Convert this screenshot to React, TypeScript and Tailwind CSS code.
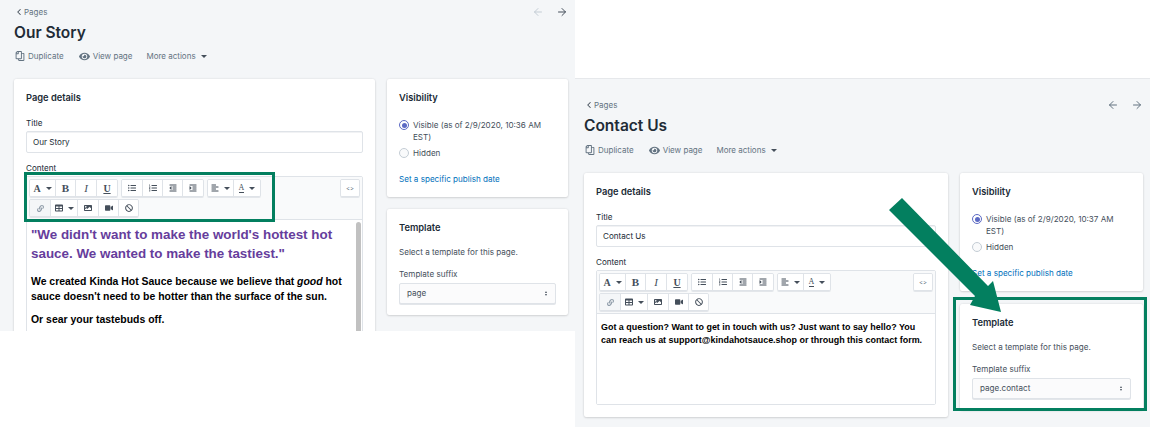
import { ChevronLeft, ArrowLeft, ArrowRight } from "lucide-react";
import { FaListUl, FaListOl, FaIndent, FaOutdent, FaAlignLeft, FaLink, FaTable, FaImage, FaVideo, FaBan, FaRegCopy, FaEye } from "react-icons/fa";

const font = "font-['Inter','Liberation_Sans',sans-serif]";

const Caret = () => (
  <span className="ml-[5px] h-0 w-0 border-x-[3px] border-t-[3px] border-x-transparent border-t-[#454f5b]" />
);

const Btn = ({ w, children, active }: { w: string; children: React.ReactNode; active?: boolean }) => (
  <div
    className={`flex h-[16px] items-center justify-center border-r border-[#dfe3e8] last:border-r-0 ${w} ${
      active ? "bg-[#f4f6f8] text-[#919eab]" : "bg-white text-[#454f5b]"
    }`}
  >
    {children}
  </div>
);

const Group = ({ children }: { children: React.ReactNode }) => (
  <div className="flex self-start overflow-hidden rounded-[2px] border border-[#dfe3e8] shadow-[0_1px_0_#e3e6ea]">{children}</div>
);

const Toolbar = () => (
  <div className="flex h-[43px] shrink-0 justify-between border-b border-[#dfe3e8] bg-[#f9fafb] px-[2px] pt-[2px]">
    <div className="flex w-[236px] flex-wrap content-start gap-x-[3px] gap-y-[2px]">
      <Group>
        <Btn w="w-[26px]">
          <span className="font-['Liberation_Serif',serif] text-[10px] font-bold">A</span>
          <Caret />
        </Btn>
        <Btn w="w-[20px]">
          <span className="font-['Liberation_Serif',serif] text-[11px] font-bold">B</span>
        </Btn>
        <Btn w="w-[21px]">
          <span className="font-['Liberation_Serif',serif] text-[11px] italic">I</span>
        </Btn>
        <Btn w="w-[20px]">
          <span className="font-['Liberation_Serif',serif] text-[10px] font-bold underline">U</span>
        </Btn>
      </Group>
      <Group>
        <Btn w="w-[21px]"><FaListUl size={8} /></Btn>
        <Btn w="w-[20px]"><FaListOl size={8} /></Btn>
        <Btn w="w-[20px]"><FaOutdent size={8} /></Btn>
        <Btn w="w-[20px]"><FaIndent size={8} /></Btn>
      </Group>
      <Group>
        <Btn w="w-[26px]"><FaAlignLeft size={8} /><Caret /></Btn>
        <Btn w="w-[26px]">
          <span className="border-b border-[#454f5b] font-['Liberation_Serif',serif] text-[8px] leading-[8px]">A</span>
          <Caret />
        </Btn>
      </Group>
      <Group>
        <Btn w="w-[21px]" active><FaLink size={7} /></Btn>
        <Btn w="w-[27px]"><FaTable size={8} /><Caret /></Btn>
        <Btn w="w-[21px]"><FaImage size={8} /></Btn>
        <Btn w="w-[20px]"><FaVideo size={8} /></Btn>
        <Btn w="w-[19px]"><FaBan size={8} /></Btn>
      </Group>
    </div>
    <Group>
      <Btn w="w-[18px]"><span className="text-[6px] text-[#637381]">&lt;&gt;</span></Btn>
    </Group>
  </div>
);

const Card = ({ title, children, className }: { title: string; children: React.ReactNode; className?: string }) => (
  <section className={`rounded-[2px] bg-white px-[12px] pt-[13px] shadow-[0_0_2px_rgba(63,63,68,0.15),0_1px_2px_rgba(63,63,68,0.15)] ${className ?? ""}`}>
    <h2 className="text-[9.3px] font-semibold leading-[12px] text-[#212b36]">{title}</h2>
    {children}
  </section>
);

const Panel = ({
  title,
  time,
  suffix,
  prevMuted,
  content,
  className,
  pad,
  actionsGap,
  sideGap,
  mainWidth,
  sideWidth,
  mainHeight,
}: {
  title: string;
  time: string;
  suffix: string;
  prevMuted?: boolean;
  content: React.ReactNode;
  className: string;
  pad: string;
  actionsGap: string;
  sideGap: string;
  mainWidth: string;
  sideWidth: string;
  mainHeight: string;
}) => (
  <div className={`overflow-hidden bg-[#f4f6f8] ${pad} ${className}`}>
    <div className="flex items-start justify-between">
      <div>
        <div className="flex h-[12px] items-center text-[8px] text-[#637381]">
          <ChevronLeft size={10} strokeWidth={2.5} className="text-[#454f5b]" />
          <span>Pages</span>
        </div>
        <h1 className="mt-[4px] text-[15.5px] font-semibold leading-[22px] text-[#212b36]">{title}</h1>
        <div className={`flex h-[12px] items-center text-[8px] text-[#637381] ${actionsGap}`}>
          <FaRegCopy size={10} className="ml-[1px] -scale-x-100 text-[#637381]" />
          <span className="ml-[3px]">Duplicate</span>
          <FaEye size={11} className="ml-[15px] text-[#637381]" />
          <span className="ml-[3px]">View page</span>
          <span className="ml-[14px]">More actions</span>
          <Caret />
        </div>
      </div>
      <div className="flex gap-[12px]">
        <ArrowLeft size={12} className={prevMuted ? "text-[#c4cdd5]" : "text-[#637381]"} />
        <ArrowRight size={12} className={prevMuted ? "text-[#454f5b]" : "text-[#637381]"} />
      </div>
    </div>
    <div className="mt-[17px] flex items-start gap-[12px]">
      <Card title="Page details" className={`shrink-0 ${mainWidth} ${mainHeight}`}>
        <div className="mt-[13px] text-[8.1px] leading-[12px] text-[#212b36]">Title</div>
        <div className="mt-[2px] flex h-[22px] items-center rounded-[2px] border border-[#dfe3e8] px-[6px] text-[8.1px] text-[#212b36] shadow-[inset_0_1px_0_#f1f2f4]">
          {title}
        </div>
        <div className="mt-[9px] text-[8.1px] leading-[12px] text-[#212b36]">Content</div>
        <div className="mt-[2px] rounded-[2px] border border-[#dfe3e8]">
          <Toolbar />
          {content}
        </div>
      </Card>
      <div className={`flex shrink-0 flex-col ${sideGap} ${sideWidth}`}>
        <Card title="Visibility" className="h-[118px]">
          <div className="mt-[15px] flex items-start text-[8.1px] leading-[12px] text-[#454f5b]">
            <span className="mr-[4px] mt-[1px] flex h-[10px] w-[10px] shrink-0 items-center justify-center rounded-full border border-[#5c6ac4] bg-white">
              <span className="h-[5px] w-[5px] rounded-full bg-[#5c6ac4]" />
            </span>
            <span className="w-[136px]">Visible (as of 2/9/2020, {time} AM EST)</span>
          </div>
          <div className="mt-[4px] flex items-center text-[8.1px] leading-[12px] text-[#454f5b]">
            <span className="mr-[4px] h-[10px] w-[10px] rounded-full border border-[#c4cdd5] bg-[#f9fafb]" />
            Hidden
          </div>
          <div className="mt-[14px] text-[8.1px] leading-[12px] text-[#006fbb]">Set a specific publish date</div>
        </Card>
        <Card title="Template" className="h-[106px]">
          <div className="mt-[12px] text-[8.1px] leading-[12px] text-[#454f5b]">Select a template for this page.</div>
          <div className="mt-[10px] text-[8.1px] leading-[12px] text-[#454f5b]">Template suffix</div>
          <div className="mt-[3px] flex h-[21px] items-center justify-between rounded-[2px] border border-[#dfe3e8] bg-[#fbfbfc] pl-[7px] pr-[8px] text-[8.1px] text-[#454f5b] shadow-[0_1px_0_#e3e6ea]">
            {suffix}
            <span className="flex flex-col gap-[1px]">
              <span className="h-0 w-0 border-x-[1.5px] border-b-[2px] border-x-transparent border-b-[#454f5b]" />
              <span className="h-0 w-0 border-x-[1.5px] border-t-[2px] border-x-transparent border-t-[#454f5b]" />
            </span>
          </div>
        </Card>
      </div>
    </div>
  </div>
);

export default function App() {
  return (
    <div className={`relative flex h-[427px] w-[1150px] items-start overflow-hidden bg-white ${font}`}>
      <Panel
        title="Our Story"
        time="10:36"
        suffix="page"
        prevMuted
        className="h-[331px] w-[575px]"
        pad="pl-[14px] pr-[7px] pt-[6px]"
        actionsGap="mt-[6px]"
        sideGap="gap-[12px]"
        mainWidth="w-[361px]"
        sideWidth="w-[181px]"
        mainHeight="h-[300px]"
        content={
          <div className="relative h-[120px] bg-white pl-[4px] pr-[18px] pt-[6px] font-['Liberation_Sans',sans-serif] font-bold">
            <p className="text-[13.4px] leading-[18.5px] text-[#663d9c]">
              "We didn't want to make the world's hottest hot sauce. We wanted to make the tastiest."
            </p>
            <p className="mt-[12px] text-[10.45px] leading-[14.5px] text-black">
              We created Kinda Hot Sauce because we believe that <em>good</em> hot sauce doesn't need to be hotter than the surface of the sun.
            </p>
            <p className="mt-[9px] text-[10.45px] leading-[14.5px] text-black">Or sear your tastebuds off.</p>
            <div className="absolute right-[1px] top-[2px] h-[120px] w-[5px] rounded-[3px] bg-[#c1c1c1]" />
          </div>
        }
      />
      <div className="mt-[78px]">
        <Panel
          title="Contact Us"
          time="10:37"
          suffix="page.contact"
          className="h-[349px] w-[575px] border-t border-[#e6e8eb]"
          pad="pl-[9px] pr-[7px] pt-[20px]"
          actionsGap="mt-[7px]"
          sideGap="gap-[13px]"
          mainWidth="w-[364px]"
          sideWidth="w-[183px]"
          mainHeight="h-[244px]"
          content={
            <div className="h-[90px] bg-white pl-[4px] pr-[6px] pt-[7px] font-['Liberation_Sans',sans-serif] text-[8.95px] font-bold leading-[13px] text-black">
              Got a question? Want to get in touch with us? Just want to say hello? You can reach us at support@kindahotsauce.shop or through this contact form.
            </div>
          }
        />
      </div>

      {/* annotations drawn over the screenshots */}
      <div className="absolute left-[24px] top-[172px] h-[50px] w-[251px] border-[3px] border-[#037f5f]" />
      <div className="absolute left-[953px] top-[297px] h-[114px] w-[194px] border-[3px] border-[#037f5f]" />
      <svg className="absolute left-[880px] top-[190px]" width="140" height="130" viewBox="0 0 140 130">
        <polygon points="22,8 9,20 95,106 90,115 121,122 113,91 108,96" fill="#037f5f" />
      </svg>
    </div>
  );
}
